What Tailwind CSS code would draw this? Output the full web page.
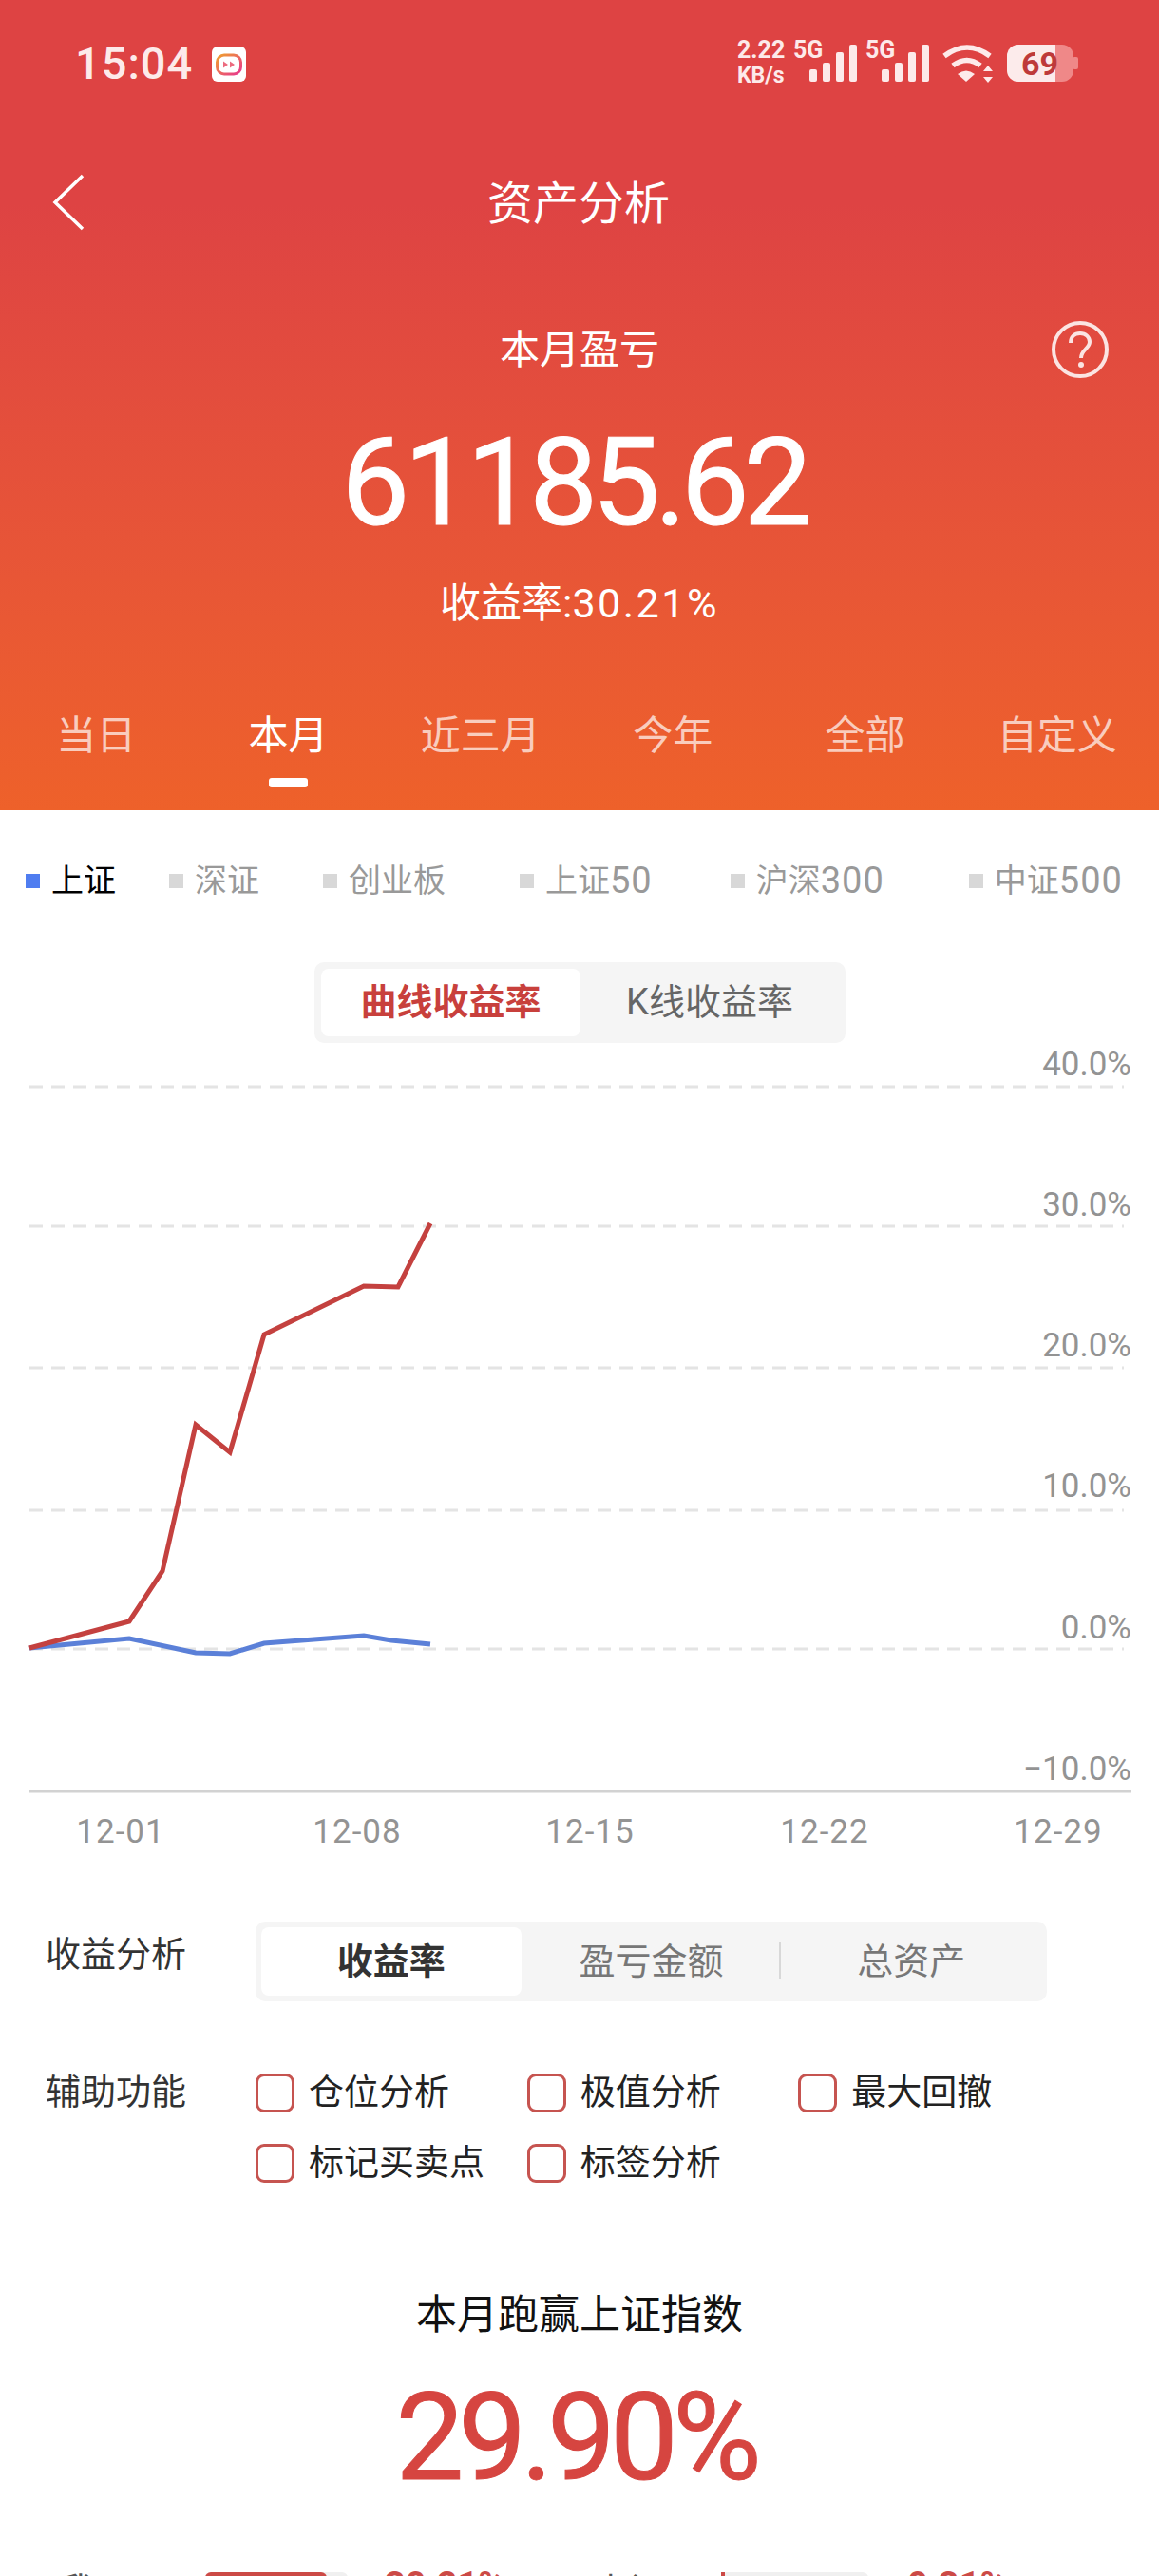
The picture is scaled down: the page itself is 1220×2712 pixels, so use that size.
<!DOCTYPE html>
<html lang="zh-CN">
<head>
  <meta charset="UTF-8"/>
  <meta name="viewport" content="width=device-width,initial-scale=1.0"/>
  <title>资产分析</title>
  <script src="https://cdn.jsdelivr.net/npm/@tailwindcss/browser@4"></script>
</head>
<body class="bg-white h-[2712px] overflow-hidden font-['Roboto','Noto_Sans_CJK_SC',sans-serif]">

  <!-- Header -->
  <header class="h-[853px] flex flex-col text-white bg-linear-to-b from-[#DE4343] from-[25%] to-[#EE612A]">
    <!-- Status bar -->
    <div class="mt-[40px] h-[50px] flex justify-between">
      <div class="flex items-center pl-[79px] pt-[4px]">
        <span class="text-[47px] leading-[40px] font-medium text-[#FDEAEA] tracking-[1px]">15:04</span>
        <svg class="ml-[20px]" width="36" height="37" viewBox="0 0 36 37">
          <defs>
            <linearGradient id="appg" x1="0" y1="0" x2="1" y2="1">
              <stop offset="0" stop-color="#EFA02E"/>
              <stop offset="1" stop-color="#E8368F"/>
            </linearGradient>
          </defs>
          <rect width="36" height="37" rx="6" fill="#FFFFFF"/>
          <rect x="5.5" y="9" width="25" height="20" rx="7.5" fill="none" stroke="url(#appg)" stroke-width="3"/>
          <path d="M12 15.5l5 3.5-5 3.5zM19 15.5l5 3.5-5 3.5z" fill="#EC6A7E"/>
        </svg>
      </div>
      <svg class="mr-[84px]" width="360" height="50" viewBox="777 40 360 50">
        <g fill="#FDEAEA" font-family="Roboto" font-weight="700">
          <text x="777" y="61" font-size="25">2.22</text>
          <text x="836" y="61" font-size="25">5G</text>
          <text x="777" y="87" font-size="23">KB/s</text>
          <text x="912" y="61" font-size="25">5G</text>
          <rect x="853" y="73" width="8" height="13" rx="2"/>
          <rect x="867" y="66" width="8" height="20" rx="2"/>
          <rect x="881" y="55" width="8" height="31" rx="2"/>
          <rect x="895" y="47" width="8" height="39" rx="2"/>
          <rect x="929" y="73" width="8" height="13" rx="2"/>
          <rect x="943" y="66" width="8" height="20" rx="2"/>
          <rect x="957" y="55" width="8" height="31" rx="2"/>
          <rect x="971" y="47" width="8" height="39" rx="2"/>
          <path d="M1018 86l-9-8q9-7 18 0z"/>
          <path d="M1041 69l5 6h-10zM1041 87l-5-6h10z"/>
        </g>
        <g fill="none" stroke="#FDEAEA" stroke-width="5.5">
          <path d="M995 59q24-18 48 0"/>
          <path d="M1004 69q15-11 29 0"/>
        </g>
        <rect x="1061" y="47" width="70" height="39" rx="12" fill="#EF8888"/>
        <rect x="1130" y="60" width="6" height="13" rx="2" fill="#EF8888"/>
        <path d="M1073 47h39v39h-39a12 12 0 0 1-12-12v-15a12 12 0 0 1 12-12z" fill="#FCEBEB"/>
        <text x="1076" y="79" font-size="34" font-weight="700" font-family="Roboto" fill="#BE3A3A">69</text>
      </svg>
    </div>

    <!-- Nav -->
    <div class="mt-[93px] h-[60px] grid grid-cols-[1fr_auto_1fr] items-center">
      <svg class="ml-[55px]" width="34" height="60" viewBox="0 0 34 60">
        <path d="M32 2L3 30l29 28" fill="none" stroke="#FFFFFF" stroke-width="3.5"/>
      </svg>
      <h1 class="h-[60px] text-[48px] leading-[63px] font-normal -translate-x-[1px]">资产分析</h1>
    </div>

    <!-- Month summary -->
    <div class="mt-[95px] h-[60px] grid grid-cols-[1fr_auto_1fr] items-center">
      <div></div>
      <div class="h-[60px] text-[42px] leading-[62px]">本月盈亏</div>
      <svg class="justify-self-end mr-[53px]" width="60" height="60" viewBox="0 0 60 60">
        <circle cx="30" cy="30" r="28" fill="none" stroke="#FFFFFF" stroke-opacity="0.85" stroke-width="4"/>
        <path d="M20 23c0-6 4-10 10-10s10 4 10 9c0 7-9 8-9 17" fill="none" stroke="#FFFFFF" stroke-opacity="0.85" stroke-width="4"/>
        <circle cx="31" cy="46" r="3" fill="#FFFFFF" fill-opacity="0.85"/>
      </svg>
    </div>

    <div class="mt-[39px] pr-[12px] h-[140px] leading-[142px] text-center text-[128px] font-normal tracking-[-6px] [-webkit-text-stroke:1px_#ffffff]">61185.62</div>
    <div class="mt-[28px] h-[60px] leading-[60px] text-center text-[43px]">收益率:<span class="tracking-[2.5px]">30.21%</span></div>

    <!-- Range tabs -->
    <div class="mt-[80px] pr-[6px] grid grid-cols-6 text-[42px] leading-[60px] text-center text-white/70">
      <div>当日</div>
      <div class="text-white">本月
        <div class="mt-[14px] mx-auto w-[41px] h-[10px] rounded-[3px] bg-white"></div>
      </div>
      <div>近三月</div>
      <div>今年</div>
      <div>全部</div>
      <div>自定义</div>
    </div>
  </header>

  <!-- Index legend -->
  <div class="mt-[49px] h-[50px] pl-[27px] flex items-center text-[34px] leading-[53px] text-[#999999]">
    <div class="flex items-center text-black"><i class="w-[15px] h-[15px] bg-[#4F7DF0] mr-[12px]"></i>上证</div>
    <div class="flex items-center ml-[56px]"><i class="w-[15px] h-[15px] bg-[#D8D8D8] mr-[12px]"></i>深证</div>
    <div class="flex items-center ml-[67px]"><i class="w-[15px] h-[15px] bg-[#D8D8D8] mr-[12px]"></i>创业板</div>
    <div class="flex items-center ml-[78px]"><i class="w-[15px] h-[15px] bg-[#D8D8D8] mr-[12px]"></i>上证<span class="text-[38px] tracking-[1px]">50</span></div>
    <div class="flex items-center ml-[82px]"><i class="w-[15px] h-[15px] bg-[#D8D8D8] mr-[12px]"></i>沪深<span class="text-[38px] tracking-[1px]">300</span></div>
    <div class="flex items-center ml-[89px]"><i class="w-[15px] h-[15px] bg-[#D8D8D8] mr-[12px]"></i>中证<span class="text-[38px] tracking-[1px]">500</span></div>
  </div>

  <!-- Curve / K-line toggle -->
  <div class="mt-[61px] ml-[331px] w-[559px] h-[85px] p-[7px] rounded-[10px] bg-[#F5F5F5] flex text-[38px] leading-[71px] text-center">
    <div class="w-[273px] rounded-[8px] bg-white font-bold text-[#C8403C]">曲线收益率</div>
    <div class="flex-1 text-[#666666]">K线收益率</div>
  </div>

  <!-- Chart -->
  <svg class="block" width="1220" height="862" viewBox="0 1098 1220 862">
    <g stroke="#E4E4E4" stroke-width="3" stroke-dasharray="14 9" fill="none">
      <path d="M31 1144H1183"/>
      <path d="M31 1291H1183"/>
      <path d="M31 1440H1183"/>
      <path d="M31 1590H1183"/>
      <path d="M31 1736H1183"/>
    </g>
    <path d="M31 1886H1191" stroke="#D2D2D2" stroke-width="3"/>
    <polyline points="31,1735 136,1725 206,1740 242,1741 278,1730 383,1722 412,1727 453,1731" fill="none" stroke="#5B80D8" stroke-width="5"/>
    <polyline points="31,1735 136,1707 171,1654 206,1500 242,1529 278,1405 383,1354 419,1355 453,1288" fill="none" stroke="#C4413F" stroke-width="5"/>
    <g fill="#939393" font-family="Roboto" font-size="35" text-anchor="end">
      <text x="1191" y="1132">40.0%</text>
      <text x="1191" y="1280">30.0%</text>
      <text x="1191" y="1428">20.0%</text>
      <text x="1191" y="1576">10.0%</text>
      <text x="1191" y="1725">0.0%</text>
      <text x="1191" y="1874">−10.0%</text>
    </g>
    <g fill="#939393" font-family="Roboto" font-size="35" letter-spacing="1" text-anchor="middle">
      <text x="127" y="1940">12-01</text>
      <text x="376" y="1940">12-08</text>
      <text x="621" y="1940">12-15</text>
      <text x="868" y="1940">12-22</text>
      <text x="1114" y="1940">12-29</text>
    </g>
  </svg>

  <!-- Analysis mode -->
  <div class="mt-[63px] flex">
    <div class="ml-[48px] w-[221px] text-[37px] leading-[72px] text-[#333333]">收益分析</div>
    <div class="w-[833px] h-[84px] p-[6px] rounded-[10px] bg-[#F5F5F5] grid grid-cols-3 items-center text-[38px] leading-[72px] text-center text-[#777777]">
      <div class="rounded-[8px] bg-white font-bold text-[#333333]">收益率</div>
      <div class="relative">盈亏金额<i class="absolute right-0 top-[16px] h-[39px] w-[2px] bg-[#D8D8D8]"></i></div>
      <div>总资产</div>
    </div>
  </div>

  <!-- Helper options -->
  <div class="mt-[76px] flex">
    <div class="ml-[48px] w-[221px] text-[37px] leading-[41px] text-[#333333]">辅助功能</div>
    <div class="w-[857px] grid grid-cols-3 gap-y-[33px] text-[37px] leading-[41px] text-[#222222]">
      <label class="flex items-center"><i class="w-[41px] h-[41px] mr-[15px] rounded-[9px] border-[3px] border-[#C65450]"></i>仓位分析</label>
      <label class="flex items-center"><i class="w-[41px] h-[41px] mr-[15px] rounded-[9px] border-[3px] border-[#C65450]"></i>极值分析</label>
      <label class="flex items-center"><i class="w-[41px] h-[41px] mr-[15px] rounded-[9px] border-[3px] border-[#C65450]"></i>最大回撤</label>
      <label class="flex items-center"><i class="w-[41px] h-[41px] mr-[15px] rounded-[9px] border-[3px] border-[#C65450]"></i>标记买卖点</label>
      <label class="flex items-center"><i class="w-[41px] h-[41px] mr-[15px] rounded-[9px] border-[3px] border-[#C65450]"></i>标签分析</label>
    </div>
  </div>

  <!-- Beat the index -->
  <div class="mt-[108px] h-[60px] leading-[63px] text-center text-[43px] text-[#111111]">本月跑赢上证指数</div>
  <div class="mt-[29px] pr-[8px] h-[140px] leading-[142px] text-center text-[128px] font-normal text-[#D64540] tracking-[-6px] [-webkit-text-stroke:1px_#D64540]">29.90%</div>

  <!-- Comparison row, cut off by the screen edge -->
  <div class="mt-[71px] flex items-start text-[38px] leading-[44px] text-[#555555]">
    <div class="ml-[62px] w-[154px]">我</div>
    <div class="mt-[2px] w-[150px] h-[20px] rounded-[6px] bg-[#F0F0F0]">
      <div class="w-[128px] h-[20px] rounded-[6px] bg-[#CC4A46]"></div>
    </div>
    <div class="ml-[39px] w-[220px] text-[38px] leading-[32px] font-bold text-[#CC4A46]">30.21%</div>
    <div class="w-[134px]">上证</div>
    <div class="mt-[2px] w-[155px] h-[20px] rounded-[6px] bg-[#F0F0F0]">
      <div class="w-[4px] h-[20px] bg-[#CC4A46]"></div>
    </div>
    <div class="ml-[41px] text-[38px] leading-[32px] font-bold text-[#CC4A46]">0.31%</div>
  </div>
</body>
</html>
